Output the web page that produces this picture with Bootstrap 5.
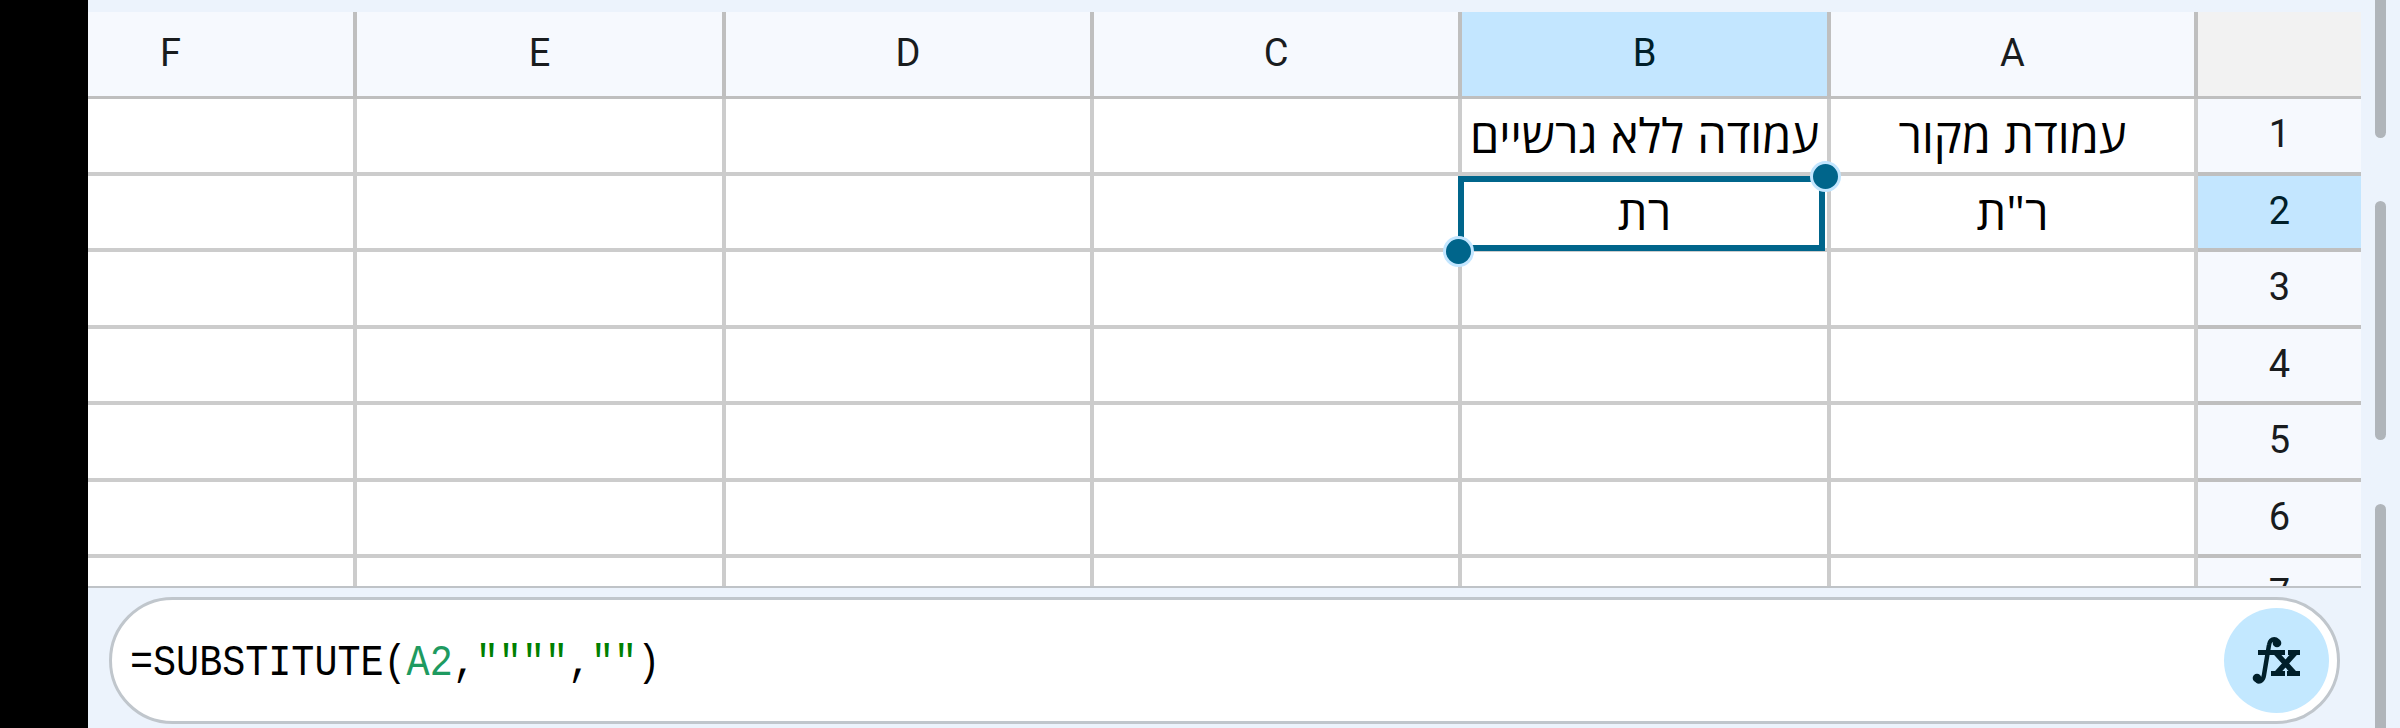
<!DOCTYPE html>
<html lang="he">
<head>
<meta charset="utf-8">
<title>Sheet</title>
<link rel="stylesheet" href="https://cdn.jsdelivr.net/npm/bootstrap@5.3.0/dist/css/bootstrap.min.css">
<style>
body{width:2400px;height:728px;overflow:hidden;background:#ecf3fc;font-family:Roboto,"Open Sans",sans-serif;color:#191c1e}
.edge{width:88px;background:#000}
.main{width:2273px;padding-top:12px}
.sheet{height:576px;overflow:hidden;border-bottom:2px solid #bfc3c7;display:grid;grid-template-columns:269px 369px 368px 368px 369px 367px 163px;grid-template-rows:87px 77px 76px 77px 76px 77px 76px 77px;background:#fff}
.cellx{border-right:4px solid #ccc;border-bottom:4px solid #ccc;display:flex;align-items:center;justify-content:center;white-space:nowrap;position:relative;font:47px/1 "Open Sans","Noto Sans",sans-serif;word-spacing:1px;color:#000}
.head{background:#f6f9fe;border-color:#bfbfbf;font:38px/1 Roboto,sans-serif;color:#191c1e;padding-bottom:3px}
.top{border-bottom-width:3px;padding-bottom:2px}
.num{border-right:0}
.on{background:#c3e6ff;color:#001f2a}
.corner{background:#f2f2f2}
.selection{position:absolute;left:-4px;top:0;width:367px;height:75px;border:6px solid #00658b}
.dot{position:absolute;width:31px;height:31px;border-radius:50%;background:#00658b;border:3px solid #c3e6ff}
.bar{margin:9px 21px 0 21px;height:127px;border:3px solid #c0c6cc;border-radius:64px;background:#fff;padding:0 8px 0 18px}
.formula{font:44px/1 "Liberation Mono",monospace;color:#000;transform:scaleX(.873);transform-origin:0 50%;white-space:pre;padding-top:5px}
.fx{width:105px;height:105px;border-radius:50%;background:#c3e8ff}
.rail{width:39px}
.thumb{width:11px;margin-left:14px;background:#b0b5ba;border-radius:6px}
</style>
<script src="https://cdn.jsdelivr.net/npm/bootstrap@5.3.0/dist/js/bootstrap.bundle.min.js"></script>
</head>
<body class="d-flex">
<div class="edge flex-shrink-0"></div>
<main class="main flex-shrink-0">
<div class="sheet">
<div class="cellx head top"><span style="margin-right:100px">F</span></div><div class="cellx head top">E</div><div class="cellx head top">D</div><div class="cellx head top">C</div><div class="cellx head top on">B</div><div class="cellx head top">A</div><div class="cellx head top num corner" style="width:167px"></div>
<div class="cellx"></div><div class="cellx"></div><div class="cellx"></div><div class="cellx"></div><div class="cellx"><span dir="rtl">עמודה ללא גרשיים</span></div><div class="cellx"><span dir="rtl">עמודת מקור</span></div><div class="cellx head num">1</div>
<div class="cellx"></div><div class="cellx"></div><div class="cellx"></div><div class="cellx"></div><div class="cellx" style="z-index:2"><span dir="rtl">רת</span><div class="selection"><i class="dot" style="right:-21.5px;top:-21.5px"></i><i class="dot" style="left:-21.5px;bottom:-21.5px"></i></div></div><div class="cellx"><span dir="rtl">ר"ת</span></div><div class="cellx head num on">2</div>
<div class="cellx"></div><div class="cellx"></div><div class="cellx"></div><div class="cellx"></div><div class="cellx"></div><div class="cellx"></div><div class="cellx head num">3</div>
<div class="cellx"></div><div class="cellx"></div><div class="cellx"></div><div class="cellx"></div><div class="cellx"></div><div class="cellx"></div><div class="cellx head num">4</div>
<div class="cellx"></div><div class="cellx"></div><div class="cellx"></div><div class="cellx"></div><div class="cellx"></div><div class="cellx"></div><div class="cellx head num">5</div>
<div class="cellx"></div><div class="cellx"></div><div class="cellx"></div><div class="cellx"></div><div class="cellx"></div><div class="cellx"></div><div class="cellx head num">6</div>
<div class="cellx"></div><div class="cellx"></div><div class="cellx"></div><div class="cellx"></div><div class="cellx"></div><div class="cellx"></div><div class="cellx head num">7</div>
</div>
<div class="bar d-flex align-items-center justify-content-between">
<div class="formula">=SUBSTITUTE(<span style="color:#1e9a60">A2</span>,<span style="color:#008000">""""</span>,<span style="color:#008000">""</span>)</div>
<div class="fx"><svg width="105" height="105" viewBox="0 0 105 105" fill="none" stroke="#001f2a"><path d="M54 36C55 30 46 29 45 37L40 67C39 74 34 75 32 71" stroke-width="4.5"/><circle cx="53" cy="35" r="4.3" fill="#001f2a" stroke="none"/><circle cx="33" cy="70" r="4.3" fill="#001f2a" stroke="none"/><path d="M34 44.500H61M64 44.500H76M47 65.500H61M63 65.500H76" stroke-width="5"/><path d="M52 45L71 66M71 45L52 66" stroke-width="5.500"/></svg></div>
</div>
</main>
<div class="rail flex-shrink-0"><div class="thumb" style="height:138px;border-radius:0 0 6px 6px"></div><div class="thumb" style="height:239px;margin-top:63px"></div><div class="thumb" style="height:240px;margin-top:64px"></div></div>
</body>
</html>
